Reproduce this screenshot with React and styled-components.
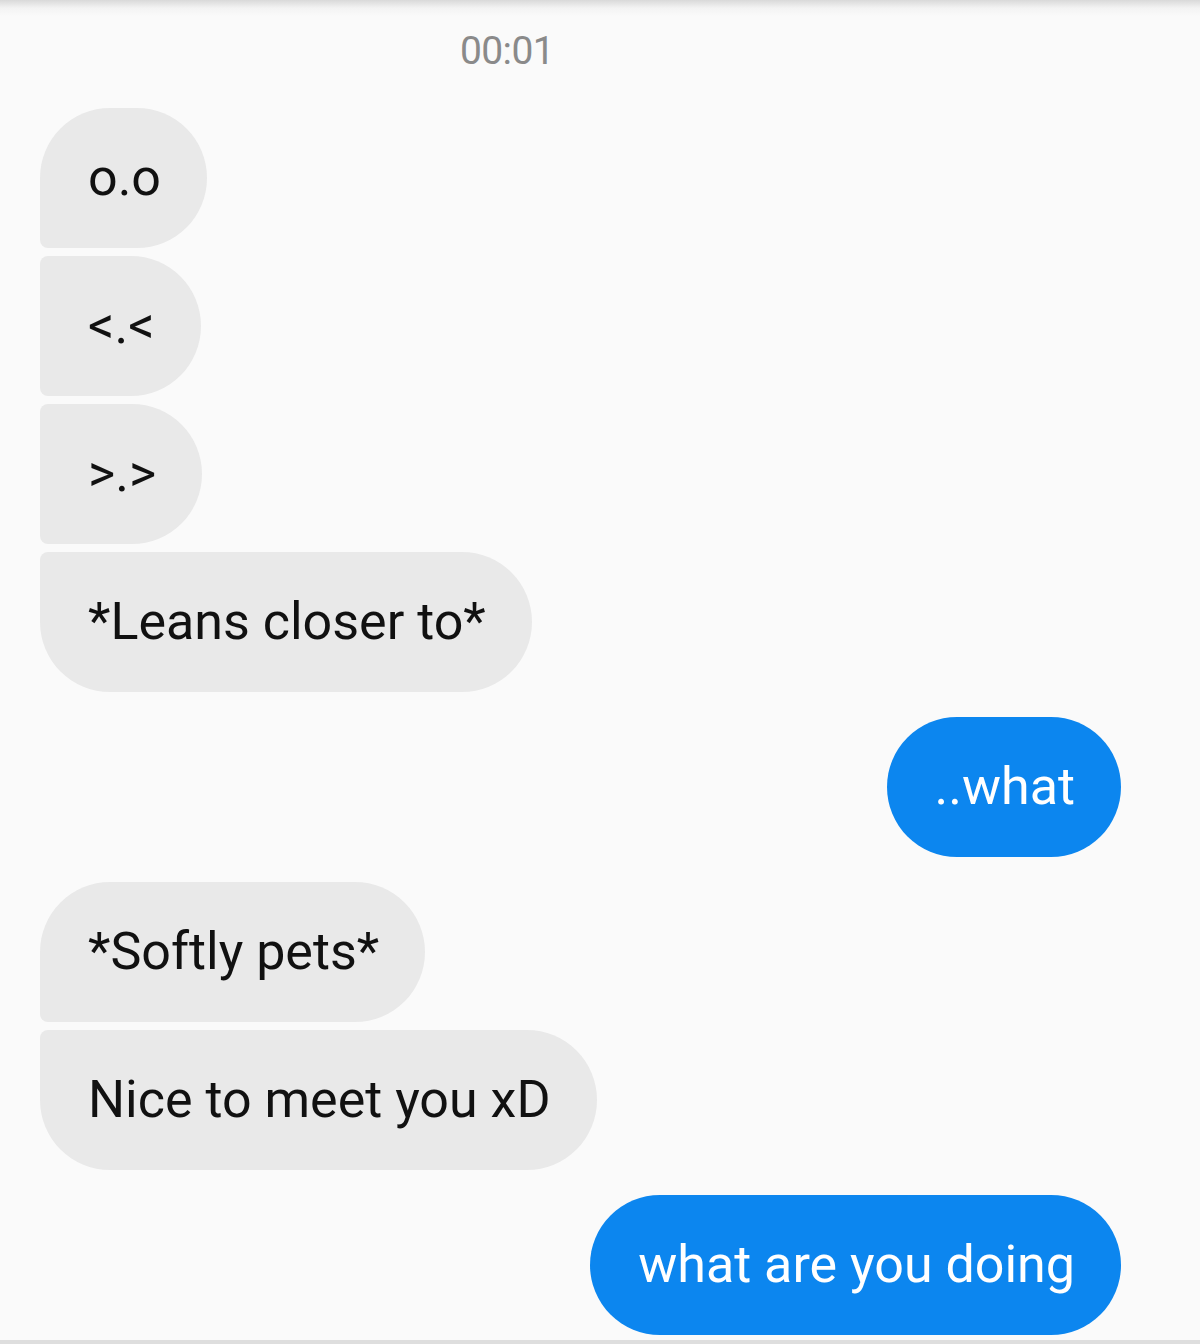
import React from 'react'
import styled, {createGlobalStyle, css} from 'styled-components'

const GlobalStyle = createGlobalStyle`
    html, body {
        margin : 0;
        padding : 0;
        background : #fafafa;
    }
    body {
        font-family : Roboto, "Noto Sans", "Liberation Sans", sans-serif;
    }
`

const messages = [
    {from : 'them', text : 'o.o', pos : 'first'},
    {from : 'them', text : '<.<', pos : 'middle'},
    {from : 'them', text : '>.>', pos : 'middle'},
    {from : 'them', text : '*Leans closer to*', pos : 'last'},
    {from : 'me', text : '..what', pos : 'single'},
    {from : 'them', text : '*Softly pets*', pos : 'first'},
    {from : 'them', text : 'Nice to meet you xD', pos : 'last'},
    {from : 'me', text : 'what are you doing', pos : 'single'},
]

function App() {
    return (
        <>
        <GlobalStyle/>
        <Screen>
            <Time>00:01</Time>
            <Thread>
                {messages.map((msg, i) => {
                    const prev = messages[i - 1]
                    const grouped = prev && prev.from === msg.from
                    return (
                        <Row key = {i} $mine = {msg.from === 'me'} $grouped = {grouped}>
                            <Bubble $mine = {msg.from === 'me'} $pos = {msg.pos}>
                                {msg.text}
                            </Bubble>
                        </Row>
                    )
                })}
            </Thread>
        </Screen>
        </>
    )
}

const Screen = styled.div`
    width : 1200px;
    height : 1344px;
    box-sizing : border-box;
    background : linear-gradient(#d9d9d9, #f3f3f3 8px, #fafafa 16px);
    border-bottom : 4px solid #dedede;
    overflow : hidden;
`

const Time = styled.div`
    padding-top : 28px;
    height : 78px;
    box-sizing : border-box;
    text-align : center;
    padding-right : 186px;
    font-size : 39px;
    color : #8a8a8a;
    letter-spacing : -0.6px;
`

const Thread = styled.div`
    display : flex;
    flex-direction : column;
    padding : 0 79px 0 40px;
`

const Row = styled.div`
    display : flex;
    justify-content : ${p => p.$mine ? 'flex-end' : 'flex-start'};
    margin-top : ${p => p.$grouped ? '8px' : '25px'};
    &:first-child {
        margin-top : 30px;
    }
`

const small = '8px'
const big = '70px'

const Bubble = styled.div`
    height : 140px;
    box-sizing : border-box;
    display : flex;
    align-items : center;
    padding : 0 46px 2px 48px;
    font-size : 52px;
    white-space : nowrap;
    border-radius : ${big};
    ${p => p.$mine ? css`
        background : #0c86ef;
        color : #fff;
    ` : css`
        background : #e9e9e9;
        color : #111;
    `}
    ${p => !p.$mine && p.$pos === 'first' && css`
        border-bottom-left-radius : ${small};
    `}
    ${p => !p.$mine && p.$pos === 'middle' && css`
        border-top-left-radius : ${small};
        border-bottom-left-radius : ${small};
    `}
    ${p => !p.$mine && p.$pos === 'last' && css`
        border-top-left-radius : ${small};
    `}
`

export default App
